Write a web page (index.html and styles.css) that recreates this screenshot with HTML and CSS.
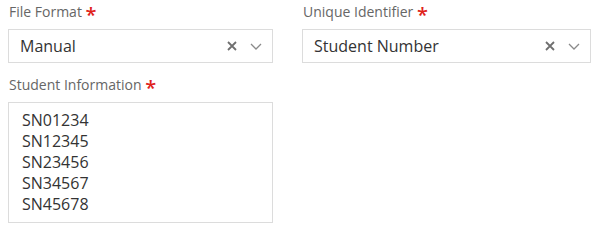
FILE: index.html
```html
<!DOCTYPE html>
<html lang="en">
<head>
  <meta charset="UTF-8">
  <title>Student Import</title>
  <link rel="stylesheet" href="styles.css">
</head>
<body>
  <form class="import-form">
    <div class="row">
      <div class="field field-format">
        <label class="label">File Format <span class="req">*</span></label>
        <div class="select">
          <span class="select-value">Manual</span>
          <span class="select-icons">
            <svg class="icon-clear" width="10" height="10" viewBox="0 0 10 10"><path d="M1 1L9 9M9 1L1 9" stroke="#6f6f6f" stroke-width="1.8" fill="none"/></svg>
            <svg class="icon-caret" width="12" height="7" viewBox="0 0 12 7"><path d="M1 1L6 6L11 1" stroke="#8a8a8a" stroke-width="1.3" fill="none"/></svg>
          </span>
        </div>
      </div>
      <div class="field field-id">
        <label class="label">Unique Identifier <span class="req">*</span></label>
        <div class="select">
          <span class="select-value">Student Number</span>
          <span class="select-icons">
            <svg class="icon-clear" width="10" height="10" viewBox="0 0 10 10"><path d="M1 1L9 9M9 1L1 9" stroke="#6f6f6f" stroke-width="1.8" fill="none"/></svg>
            <svg class="icon-caret" width="12" height="7" viewBox="0 0 12 7"><path d="M1 1L6 6L11 1" stroke="#8a8a8a" stroke-width="1.3" fill="none"/></svg>
          </span>
        </div>
      </div>
    </div>
    <div class="row">
      <div class="field field-format">
        <label class="label">Student Information <span class="req">*</span></label>
        <div class="textarea">SN01234
SN12345
SN23456
SN34567
SN45678</div>
      </div>
    </div>
  </form>
</body>
</html>
```

FILE: styles.css
```css
/* Formulario de importación */
body {
  margin: 0;
  padding: 0;
  background-color: #fff;
  font-family: 'Open Sans', sans-serif;
  color: #333;
}
.import-form {
  padding: 2px 8px 0;
}
.row {
  display: flex;
  gap: 29px;
  margin-bottom: 12px;
}
.field-format {
  width: 265px;
}
.field-id {
  width: 289px;
}
.label {
  display: block;
  font-size: 14px;
  line-height: 20px;
  color: #666;
  margin: 0 0 7px 1px;
}
.req {
  color: #e0231b;
  font-size: 20px;
  font-weight: 600;
  line-height: 10px;
  vertical-align: -5px;
}
.select {
  box-sizing: border-box;
  height: 34px;
  border: 1px solid #dcdcdc;
  display: flex;
  align-items: center;
  padding: 0 10px 0 11px;
}
.select-value {
  flex: 1;
  font-size: 16px;
  line-height: 22px;
  color: #333;
}
.select-icons {
  display: flex;
  align-items: center;
  gap: 13px;
}
.textarea {
  box-sizing: border-box;
  height: 121px;
  border: 1px solid #dcdcdc;
  padding: 7px 13px 3px;
  font-size: 16px;
  line-height: 21px;
  white-space: pre;
  color: #333;
}
```
